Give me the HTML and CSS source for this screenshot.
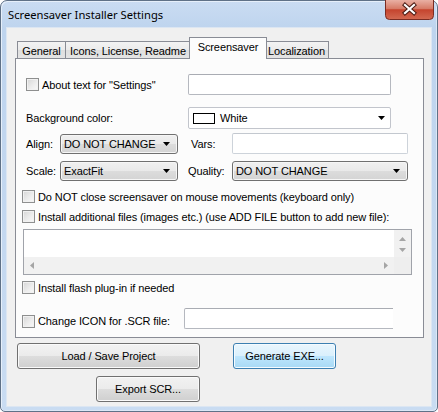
FILE: index.html
```html
<!DOCTYPE html>
<html>
<head>
<meta charset="utf-8">
<link rel="stylesheet" href="styles.css">
</head>
<body>
<div class="window">
  <div class="titlebar">
    <span class="title">Screensaver Installer Settings</span>
    <div class="close">
      <svg width="49" height="20" viewBox="0 0 49 20">
        <defs>
          <linearGradient id="cg" x1="0" y1="0" x2="0" y2="1">
            <stop offset="0" stop-color="#e9b0a4"/>
            <stop offset="0.45" stop-color="#d67a66"/>
            <stop offset="0.5" stop-color="#c5442e"/>
            <stop offset="1" stop-color="#d36a52"/>
          </linearGradient>
        </defs>
        <path d="M0.5 0 V15.5 Q0.5 19.5 4.5 19.5 H44.5 Q48.5 19.5 48.5 15.5 V0" fill="url(#cg)" stroke="#7a2c22"/>
        <path d="M20 5 L29 13 M29 5 L20 13" stroke="#4a1a12" stroke-width="4.2" stroke-linecap="square"/>
        <path d="M20 5 L29 13 M29 5 L20 13" stroke="#ffffff" stroke-width="2.2" stroke-linecap="square"/>
      </svg>
    </div>
  </div>
  <div class="client">
    <div class="tabstrip">
      <div class="tab t-general">General</div>
      <div class="tab t-icons">Icons, License, Readme</div>
      <div class="tab t-screen selected">Screensaver</div>
      <div class="tab t-local">Localization</div>
    </div>
    <div class="panel">
      <div class="row r-about">
        <div class="chklabel col-first"><span class="chk"></span><span>About text for "Settings"</span></div>
        <div class="textbox tb-about"></div>
      </div>
      <div class="row r-bg">
        <span class="lbl col-first">Background color:</span>
        <div class="colorcombo">
          <span class="swatch"></span>
          <span class="val">White</span>
          <svg class="arrow" width="7" height="4" viewBox="0 0 7 4"><path d="M0 0H7L3.5 4Z" fill="#000"/></svg>
        </div>
      </div>
      <div class="grid">
        <span class="lbl">Align:</span>
        <div class="combo"><span>DO NOT CHANGE</span><svg class="arrow" width="7" height="4" viewBox="0 0 7 4"><path d="M0 0H7L3.5 4Z" fill="#000"/></svg></div>
        <span class="lbl lbl-vars">Vars:</span>
        <div class="textbox tb-vars"></div>
        <span class="lbl">Scale:</span>
        <div class="combo"><span>ExactFit</span><svg class="arrow" width="7" height="4" viewBox="0 0 7 4"><path d="M0 0H7L3.5 4Z" fill="#000"/></svg></div>
        <span class="lbl lbl-quality">Quality:</span>
        <div class="combo"><span>DO NOT CHANGE</span><svg class="arrow" width="7" height="4" viewBox="0 0 7 4"><path d="M0 0H7L3.5 4Z" fill="#000"/></svg></div>
      </div>
      <div class="row r-dnc">
        <div class="chklabel"><span class="chk"></span><span>Do NOT close screensaver on mouse movements (keyboard only)</span></div>
      </div>
      <div class="row r-install">
        <div class="chklabel"><span class="chk"></span><span>Install additional files (images etc.) (use ADD FILE button to add new file):</span></div>
      </div>
      <div class="listbox">
        <div class="lb-content"></div>
        <div class="vscroll">
          <svg width="7" height="4" viewBox="0 0 7 4"><path d="M3.5 0L7 4H0Z" fill="#a5a5a5"/></svg>
          <svg width="7" height="4" viewBox="0 0 7 4"><path d="M0 0H7L3.5 4Z" fill="#a5a5a5"/></svg>
        </div>
        <div class="hscroll">
          <svg width="4" height="7" viewBox="0 0 4 7"><path d="M4 0V7L0 3.5Z" fill="#a5a5a5"/></svg>
          <svg width="4" height="7" viewBox="0 0 4 7"><path d="M0 0V7L4 3.5Z" fill="#a5a5a5"/></svg>
        </div>
        <div class="corner"></div>
      </div>
      <div class="row r-flash">
        <div class="chklabel"><span class="chk"></span><span>Install flash plug-in if needed</span></div>
      </div>
      <div class="row r-icon">
        <div class="chklabel col-icon"><span class="chk"></span><span>Change ICON for .SCR file:</span></div>
        <div class="textbox tb-icon"></div>
      </div>
    </div>
    <div class="btnrow1">
      <div class="btn b-load">Load / Save Project</div>
      <div class="btn b-gen">Generate EXE...</div>
    </div>
    <div class="btnrow2">
      <div class="btn b-export">Export SCR...</div>
    </div>
  </div>
</div>
</body>
</html>
```

FILE: styles.css
```css
html, body {
  margin: 0;
  padding: 0;
  background: #ffffff;
}
body {
  font-family: "Liberation Sans", Arial, sans-serif;
  font-size: 11px;
  letter-spacing: -0.1px;
  color: #000;
}
.window {
  width: 438px;
  height: 412px;
  box-sizing: border-box;
  border: 1px solid #5f7187;
  border-radius: 7px 7px 5px 5px;
  background: linear-gradient(#cadcf2, #bed4ee 28px, #c4d8f0 60%, #c9dcf2);
  box-shadow: inset 1px 1px 0 #e6effa, inset -1px -1px 0 #dbe7f6;
  padding: 0 6px 5px 6px;
  display: flex;
  flex-direction: column;
}
.titlebar {
  height: 27px;
  display: flex;
  align-items: center;
  padding-left: 1px;
}
.title {
  font-family: "Noto Sans", "Open Sans", sans-serif;
  font-size: 11.2px;
  letter-spacing: 0;
  color: #000;
}
.close {
  margin-left: auto;
  margin-right: -3px;
  margin-top: -1px;
  align-self: flex-start;
  width: 49px;
  height: 20px;
}
.close svg { display: block; }
.client {
  flex: 1;
  background: #f0f0f0;
  display: flex;
  flex-direction: column;
  box-shadow: 0 0 0 1px #dce6f2;
}
.tabstrip {
  height: 30px;
  display: flex;
  align-items: flex-end;
  padding-left: 10px;
}
.tab {
  box-sizing: border-box;
  height: 17px;
  border: 1px solid #898c95;
  border-bottom: none;
  background: linear-gradient(#f3f3f3, #ebebeb 50%, #dedede 51%, #e4e4e4);
  display: flex;
  align-items: center;
  justify-content: center;
  padding-top: 1px;
  white-space: nowrap;
}
.t-general { width: 49px; }
.t-icons { width: 125px; border-left: none; }
.t-screen { width: 75px; }
.t-local { width: 64px; border-left: none; }
.tab.selected {
  height: 22px;
  margin-bottom: -1px;
  margin-left: -2px;
  margin-right: -2px;
  width: 78px;
  background: #fcfcfc;
  position: relative;
  z-index: 1;
  padding-top: 0;
  padding-bottom: 3px;
}
.panel {
  box-sizing: border-box;
  margin-left: 8px;
  width: 409px;
  height: 280px;
  border: 1px solid #898c95;
  background: #fcfcfc;
  padding-bottom: 8px;
}
.row {
  display: flex;
  align-items: center;
}
.chklabel {
  display: flex;
  align-items: center;
  white-space: nowrap;
}
.chk {
  box-sizing: border-box;
  width: 13px;
  height: 13px;
  border: 1px solid #8e8f8f;
  background: linear-gradient(135deg, #d6d6d6, #eeeeee 60%, #f8f8f8);
  box-shadow: inset 0 0 0 1px #f1f1f1;
  margin-right: 3px;
  flex: none;
}
.textbox {
  box-sizing: border-box;
  background: #fff;
  border: 1px solid #b5b8bf;
  border-top-color: #a9acb3;
  border-radius: 2px;
}
.r-about {
  margin-top: 15px;
  height: 21px;
  padding-left: 10px;
}
.col-first { width: 162px; flex: none; }
.tb-about { width: 203px; height: 21px; }
.r-bg {
  margin-top: 12px;
  height: 22px;
  padding-left: 10px;
}
.colorcombo {
  box-sizing: border-box;
  width: 203px;
  height: 22px;
  border: 1px solid #c2c5cc;
  border-radius: 2px;
  background: #fff;
  display: flex;
  align-items: center;
  padding-left: 4px;
  padding-right: 5px;
}
.swatch {
  box-sizing: border-box;
  width: 22px;
  height: 11px;
  border: 1px solid #000;
  background: #fff;
  margin-right: 5px;
}
.colorcombo .arrow { margin-left: auto; }
.grid {
  margin-top: 4px;
  padding-left: 10px;
  display: grid;
  grid-template-columns: 34px 118px 54px 176px;
  grid-template-rows: 21px 21px;
  row-gap: 6px;
  align-items: center;
}
.lbl-vars { padding-left: 13px; }
.lbl-quality { padding-left: 10px; }
.combo {
  box-sizing: border-box;
  height: 20px;
  border: 1px solid #707070;
  border-radius: 3px;
  background: linear-gradient(#f0f0f0, #e9e9e9 50%, #dcdcdc 51%, #d4d4d4);
  box-shadow: inset 0 0 0 1px #f6f6f6;
  display: flex;
  align-items: center;
  padding-left: 3px;
  padding-right: 7px;
}
.combo .arrow { margin-left: auto; }
.tb-vars {
  height: 21px;
  border-color: #cdd3da;
  border-top-color: #c3c8cf;
}
.r-dnc {
  margin-top: 8px;
  height: 15px;
  padding-left: 6px;
}
.r-install {
  margin-top: 5px;
  height: 15px;
  padding-left: 6px;
}
.listbox {
  box-sizing: border-box;
  margin-top: 5px;
  margin-left: 7px;
  width: 389px;
  height: 46px;
  border: 1px solid #a0a3aa;
  background: #fff;
  display: grid;
  grid-template-columns: 1fr 17px;
  grid-template-rows: 1fr 17px;
}
.vscroll {
  background: #f1f1f1;
  display: flex;
  flex-direction: column;
  align-items: center;
  justify-content: space-around;
  padding: 3px 0 2px;
}
.hscroll {
  background: #f1f1f1;
  display: flex;
  align-items: center;
  justify-content: space-between;
  padding: 0 6px 0 6px;
}
.corner { background: #eeeeee; }
.r-flash {
  margin-top: 5px;
  height: 15px;
  padding-left: 6px;
}
.r-icon {
  margin-top: 13px;
  height: 21px;
  padding-left: 6px;
}
.col-icon { width: 162px; flex: none; padding-top: 5px; }
.tb-icon {
  width: 209px;
  height: 21px;
  border-right: none;
  border-radius: 2px 0 0 2px;
}
.btn {
  box-sizing: border-box;
  height: 26px;
  border: 1px solid #707070;
  border-radius: 3px;
  background: linear-gradient(#f2f2f2, #ebebeb 50%, #dddddd 51%, #cfcfcf);
  box-shadow: inset 0 0 0 1px #fafafa;
  display: flex;
  align-items: center;
  justify-content: center;
}
.btnrow1 {
  display: flex;
  margin-top: 5px;
  padding-left: 10px;
}
.b-load { width: 183px; }
.b-gen {
  width: 103px;
  margin-left: 33px;
  border-color: #3c7fb1;
  background: linear-gradient(#eaf6fd, #d9f0fc 50%, #bee6fd 51%, #a7d9f5);
  box-shadow: inset 0 0 0 1px #f4fbff;
}
.btnrow2 {
  display: flex;
  margin-top: 7px;
  padding-left: 89px;
}
.b-export { width: 104px; }
```
